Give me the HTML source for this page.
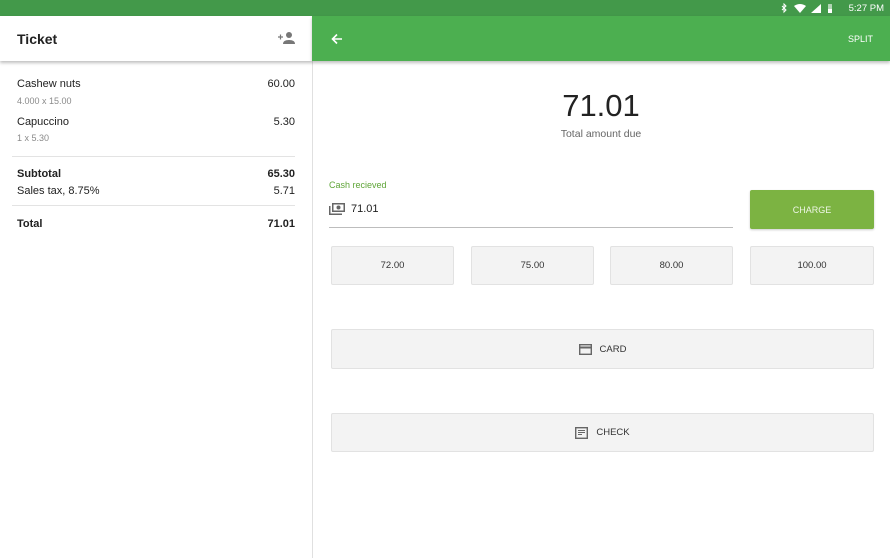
<!DOCTYPE html>
<html><head><meta charset="utf-8"><style>
*{margin:0;padding:0;box-sizing:border-box}
body{width:890px;height:558px;overflow:hidden;background:#fff;font-family:"Liberation Sans",Roboto,sans-serif;position:relative;color:#212121}
.abs{position:absolute}
.sb{left:0;top:0;width:890px;height:16px;background:#43994a}
.lh{left:0;top:16px;width:312px;height:45px;background:#fff;box-shadow:0 2px 3px rgba(0,0,0,.25);z-index:2}
.tb{left:312px;top:16px;width:578px;height:45px;background:#4caf50;box-shadow:0 2px 3px rgba(0,0,0,.25);z-index:2}
.div{left:312px;top:61px;width:1px;height:497px;background:#e0e0e0}
.row{left:17px;width:278px;display:flex;justify-content:space-between;font-size:11px}
.sub{left:17px;font-size:9px;color:#8a8a8a}
.hr{left:12px;width:283px;height:1px;background:#e3e3e3}
.btn{background:#f3f3f3;border:1px solid #e2e2e2;border-radius:2px;font-size:9.5px;display:flex;align-items:center;justify-content:center;color:#333}
</style></head><body>
<div class="abs sb"></div>
<div class="abs" style="right:6px;top:3px;font-size:9.5px;color:#fff">5:27 PM</div>
<svg class="abs" style="left:780px;top:3px" width="58" height="11" viewBox="0 0 58 11" fill="#fff">
<path d="M2 3l4 4-2 2V1l2 2-4 4" stroke="#fff" fill="none" stroke-width="1"/>
<path d="M14 3q6-4 12 0l-6 7z"/>
<path d="M31 10h10V1z"/>
<rect x="48" y="1" width="4" height="9" rx=".5" opacity=".6"/><rect x="48" y="6" width="4" height="4"/>
</svg>
<div class="abs lh"><div class="abs" style="left:17px;top:15px;font-size:14px;font-weight:bold;color:#222">Ticket</div>
<svg class="abs" style="left:278px;top:16px" width="18" height="12" viewBox="0 0 18 12" fill="#777"><path d="M0 5h5M2.5 2.5v5" stroke="#777" stroke-width="1.2"/><circle cx="11" cy="3" r="3"/><path d="M5 12q0-4 6-4t6 4z"/></svg></div>
<div class="abs tb"><svg class="abs" style="left:19px;top:17px" width="12" height="12" viewBox="0 0 12 12" fill="none" stroke="#fff" stroke-width="1.6"><path d="M11 6H1.5M6 1.5L1.5 6 6 10.5"/></svg>
<div class="abs" style="right:17px;top:18px;color:#fff;font-size:9px">SPLIT</div></div>
<div class="abs div"></div>
<div class="abs row" style="top:78px"><span>Cashew nuts</span><span>60.00</span></div>
<div class="abs sub" style="top:96px">4.000 x 15.00</div>
<div class="abs row" style="top:116px"><span>Capuccino</span><span>5.30</span></div>
<div class="abs sub" style="top:133px">1 x 5.30</div>
<div class="abs hr" style="top:156px"></div>
<div class="abs row" style="top:168px;font-weight:bold;color:#222"><span>Subtotal</span><span>65.30</span></div>
<div class="abs row" style="top:185px"><span>Sales tax, 8.75%</span><span>5.71</span></div>
<div class="abs hr" style="top:205px"></div>
<div class="abs row" style="top:218px;font-weight:bold"><span>Total</span><span>71.01</span></div>

<div class="abs" style="left:312px;width:578px;top:88px;text-align:center;font-size:31px;color:#222">71.01</div>
<div class="abs" style="left:312px;width:578px;top:128px;text-align:center;font-size:10.5px;color:#666">Total amount due</div>
<div class="abs" style="left:329px;top:180px;font-size:9px;color:#5fa538">Cash recieved</div>
<svg class="abs" style="left:329px;top:203px" width="16" height="12" viewBox="0 0 16 12" fill="#666"><path d="M0 3h1.5v7.5H13V12H0z"/><rect x="3" y="0" width="13" height="9"/><rect x="4.5" y="1.5" width="10" height="6" fill="#fff"/><circle cx="9.5" cy="4.5" r="2"/></svg>
<div class="abs" style="left:351px;top:203px;font-size:11px">71.01</div>
<div class="abs" style="left:329px;top:227px;width:404px;height:1px;background:#bdbdbd"></div>
<div class="abs" style="left:750px;top:190px;width:124px;height:39px;background:#7cb342;color:#eef6e6;font-size:9px;display:flex;align-items:center;justify-content:center;border-radius:2px;box-shadow:0 1px 2px rgba(0,0,0,.2)">CHARGE</div>
<div class="abs btn" style="left:331px;top:246px;width:123px;height:39px">72.00</div>
<div class="abs btn" style="left:471px;top:246px;width:123px;height:39px">75.00</div>
<div class="abs btn" style="left:610px;top:246px;width:123px;height:39px">80.00</div>
<div class="abs btn" style="left:750px;top:246px;width:124px;height:39px">100.00</div>
<div class="abs btn" style="left:331px;top:329px;width:543px;height:40px"><svg width="13" height="11" viewBox="0 0 13 11" style="margin-right:8px"><rect x=".7" y=".7" width="11.6" height="9.6" fill="none" stroke="#666" stroke-width="1.4"/><rect x="1" y="2.5" width="11" height="2" fill="#666"/></svg>CARD</div>
<div class="abs btn" style="left:331px;top:413px;width:543px;height:39px"><svg width="13" height="12" viewBox="0 0 13 12" style="margin-right:8px"><rect x=".7" y=".7" width="11.6" height="10.6" fill="none" stroke="#666" stroke-width="1.4"/><path d="M3 3.5h7M3 5.5h7M3 7.5h4" stroke="#666"/></svg>CHECK</div>
</body></html>
